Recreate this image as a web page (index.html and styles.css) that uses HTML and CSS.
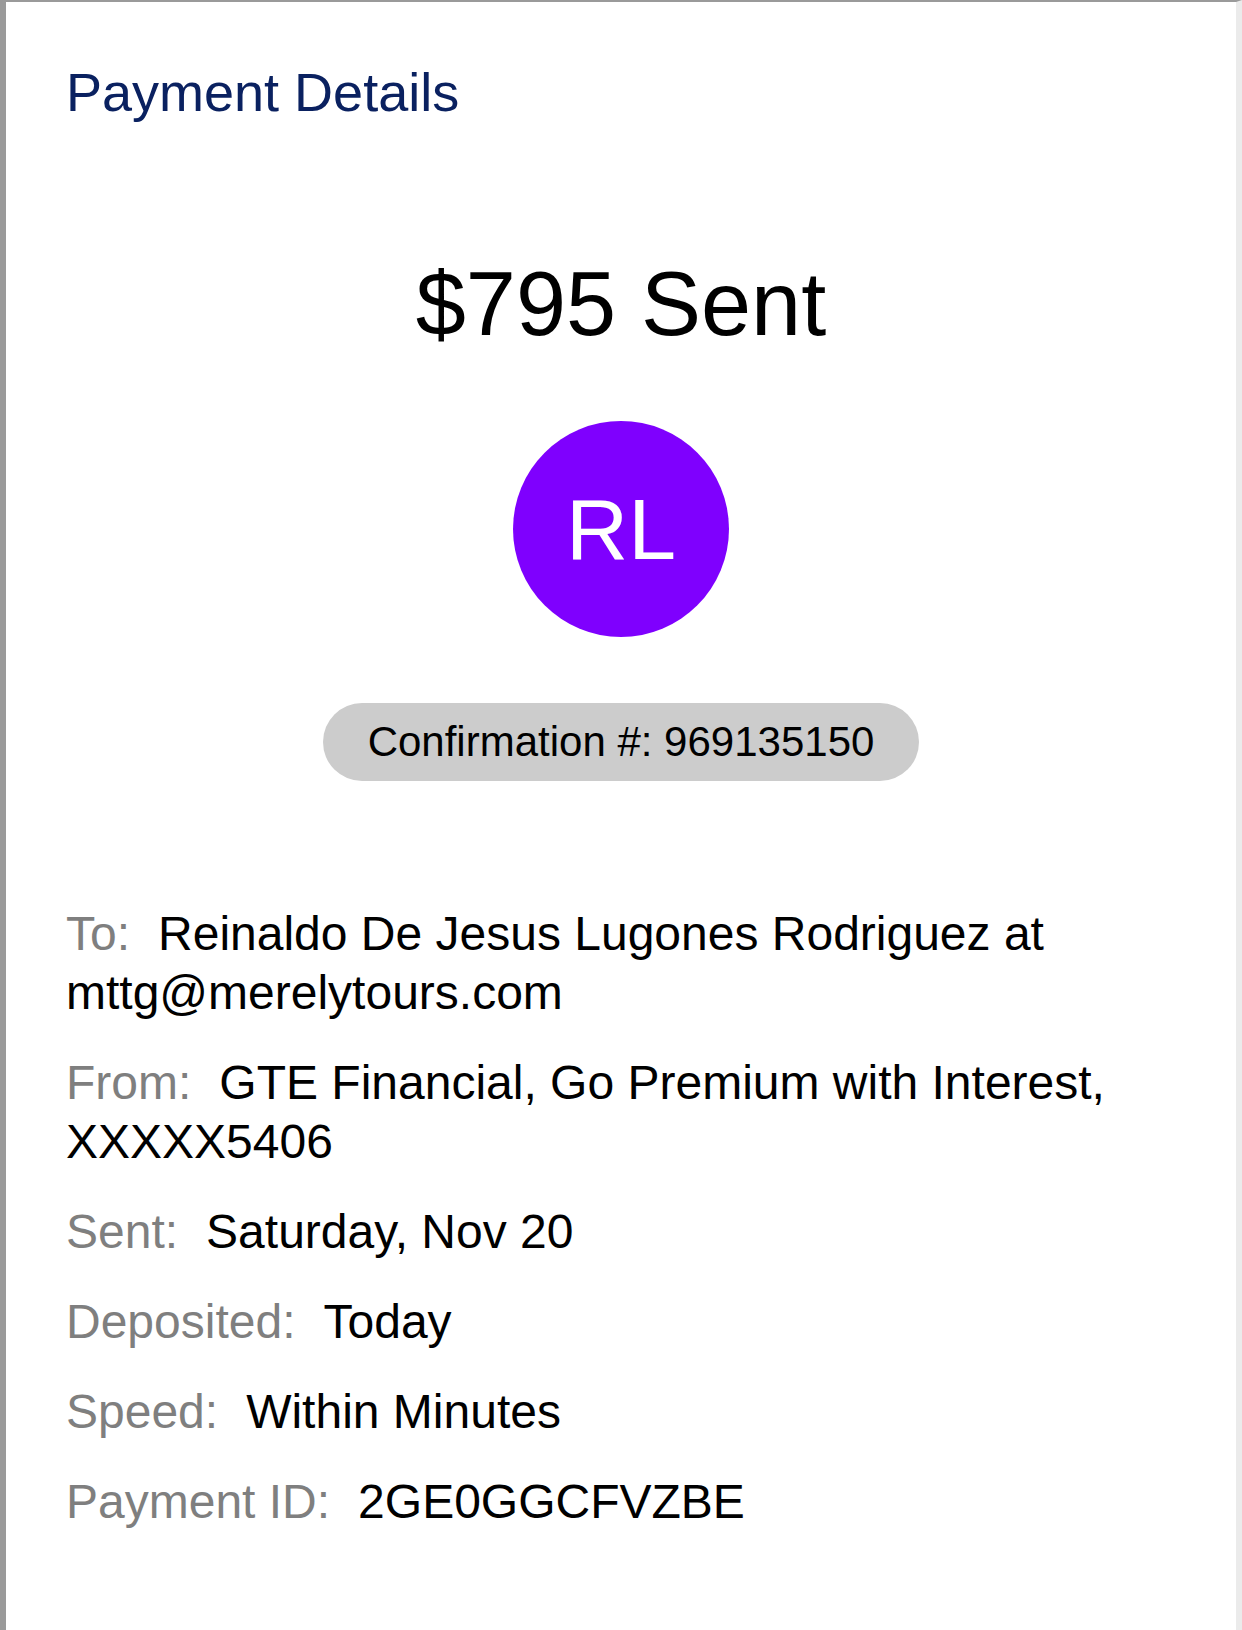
FILE: index.html
```html
<!DOCTYPE html>
<html lang="en">
<head>
    <meta charset="UTF-8">
    <meta name="viewport" content="width=device-width, initial-scale=1.0">
    <title>Payment Details</title>
    <link rel="stylesheet" href="styles.css">
</head>
<body>
    <div class="page">
        <h1 class="title">Payment Details</h1>

        <div class="amount">$795 Sent</div>

        <div class="avatar">RL</div>

        <div class="confirmation">
            <span class="pill">Confirmation #: 969135150</span>
        </div>

        <div class="details">
            <p><span class="label">To:</span><span class="value">Reinaldo De Jesus Lugones Rodriguez at mttg@merelytours.com</span></p>
            <p><span class="label">From:</span><span class="value">GTE Financial, Go Premium with Interest, XXXXX5406</span></p>
            <p><span class="label">Sent:</span><span class="value">Saturday, Nov 20</span></p>
            <p><span class="label">Deposited:</span><span class="value">Today</span></p>
            <p><span class="label">Speed:</span><span class="value">Within Minutes</span></p>
            <p><span class="label">Payment ID:</span><span class="value">2GE0GGCFVZBE</span></p>
        </div>
    </div>
</body>
</html>
```

FILE: styles.css
```css
html, body {
    margin: 0;
    padding: 0;
    background-color: #ffffff;
}
body {
    font-family: 'Liberation Sans', Arial, Helvetica, sans-serif;
    color: #000000;
}
.page {
    box-sizing: border-box;
    min-height: 100vh;
    border-top: 2px solid #9a9a9a;
    border-left: 6px solid #9a9a9a;
    border-right: 6px solid #ebebeb;
    padding: 0 60px;
}
.title {
    margin: 59px 0 0 0;
    font-size: 54px;
    line-height: 62px;
    font-weight: normal;
    color: #0a2160;
}
.amount {
    margin-top: 131px;
    font-size: 90px;
    line-height: 100px;
    text-align: center;
}
.avatar {
    width: 216px;
    height: 216px;
    margin: 67px auto 0 auto;
    border-radius: 50%;
    background-color: #7f00fe;
    color: #ffffff;
    font-size: 86px;
    display: flex;
    align-items: center;
    justify-content: center;
}
.confirmation {
    margin-top: 66px;
    text-align: center;
    line-height: 0;
}
.pill {
    display: inline-block;
    height: 78px;
    line-height: 78px;
    padding: 0 45px;
    border-radius: 39px;
    background-color: #cccccc;
    font-size: 42px;
}
.details {
    margin-top: 123px;
}
.details p {
    margin: 0 0 31px 0;
    font-size: 48px;
    line-height: 59px;
}
.label {
    color: #7f7f7f;
    margin-right: 28px;
}
```
